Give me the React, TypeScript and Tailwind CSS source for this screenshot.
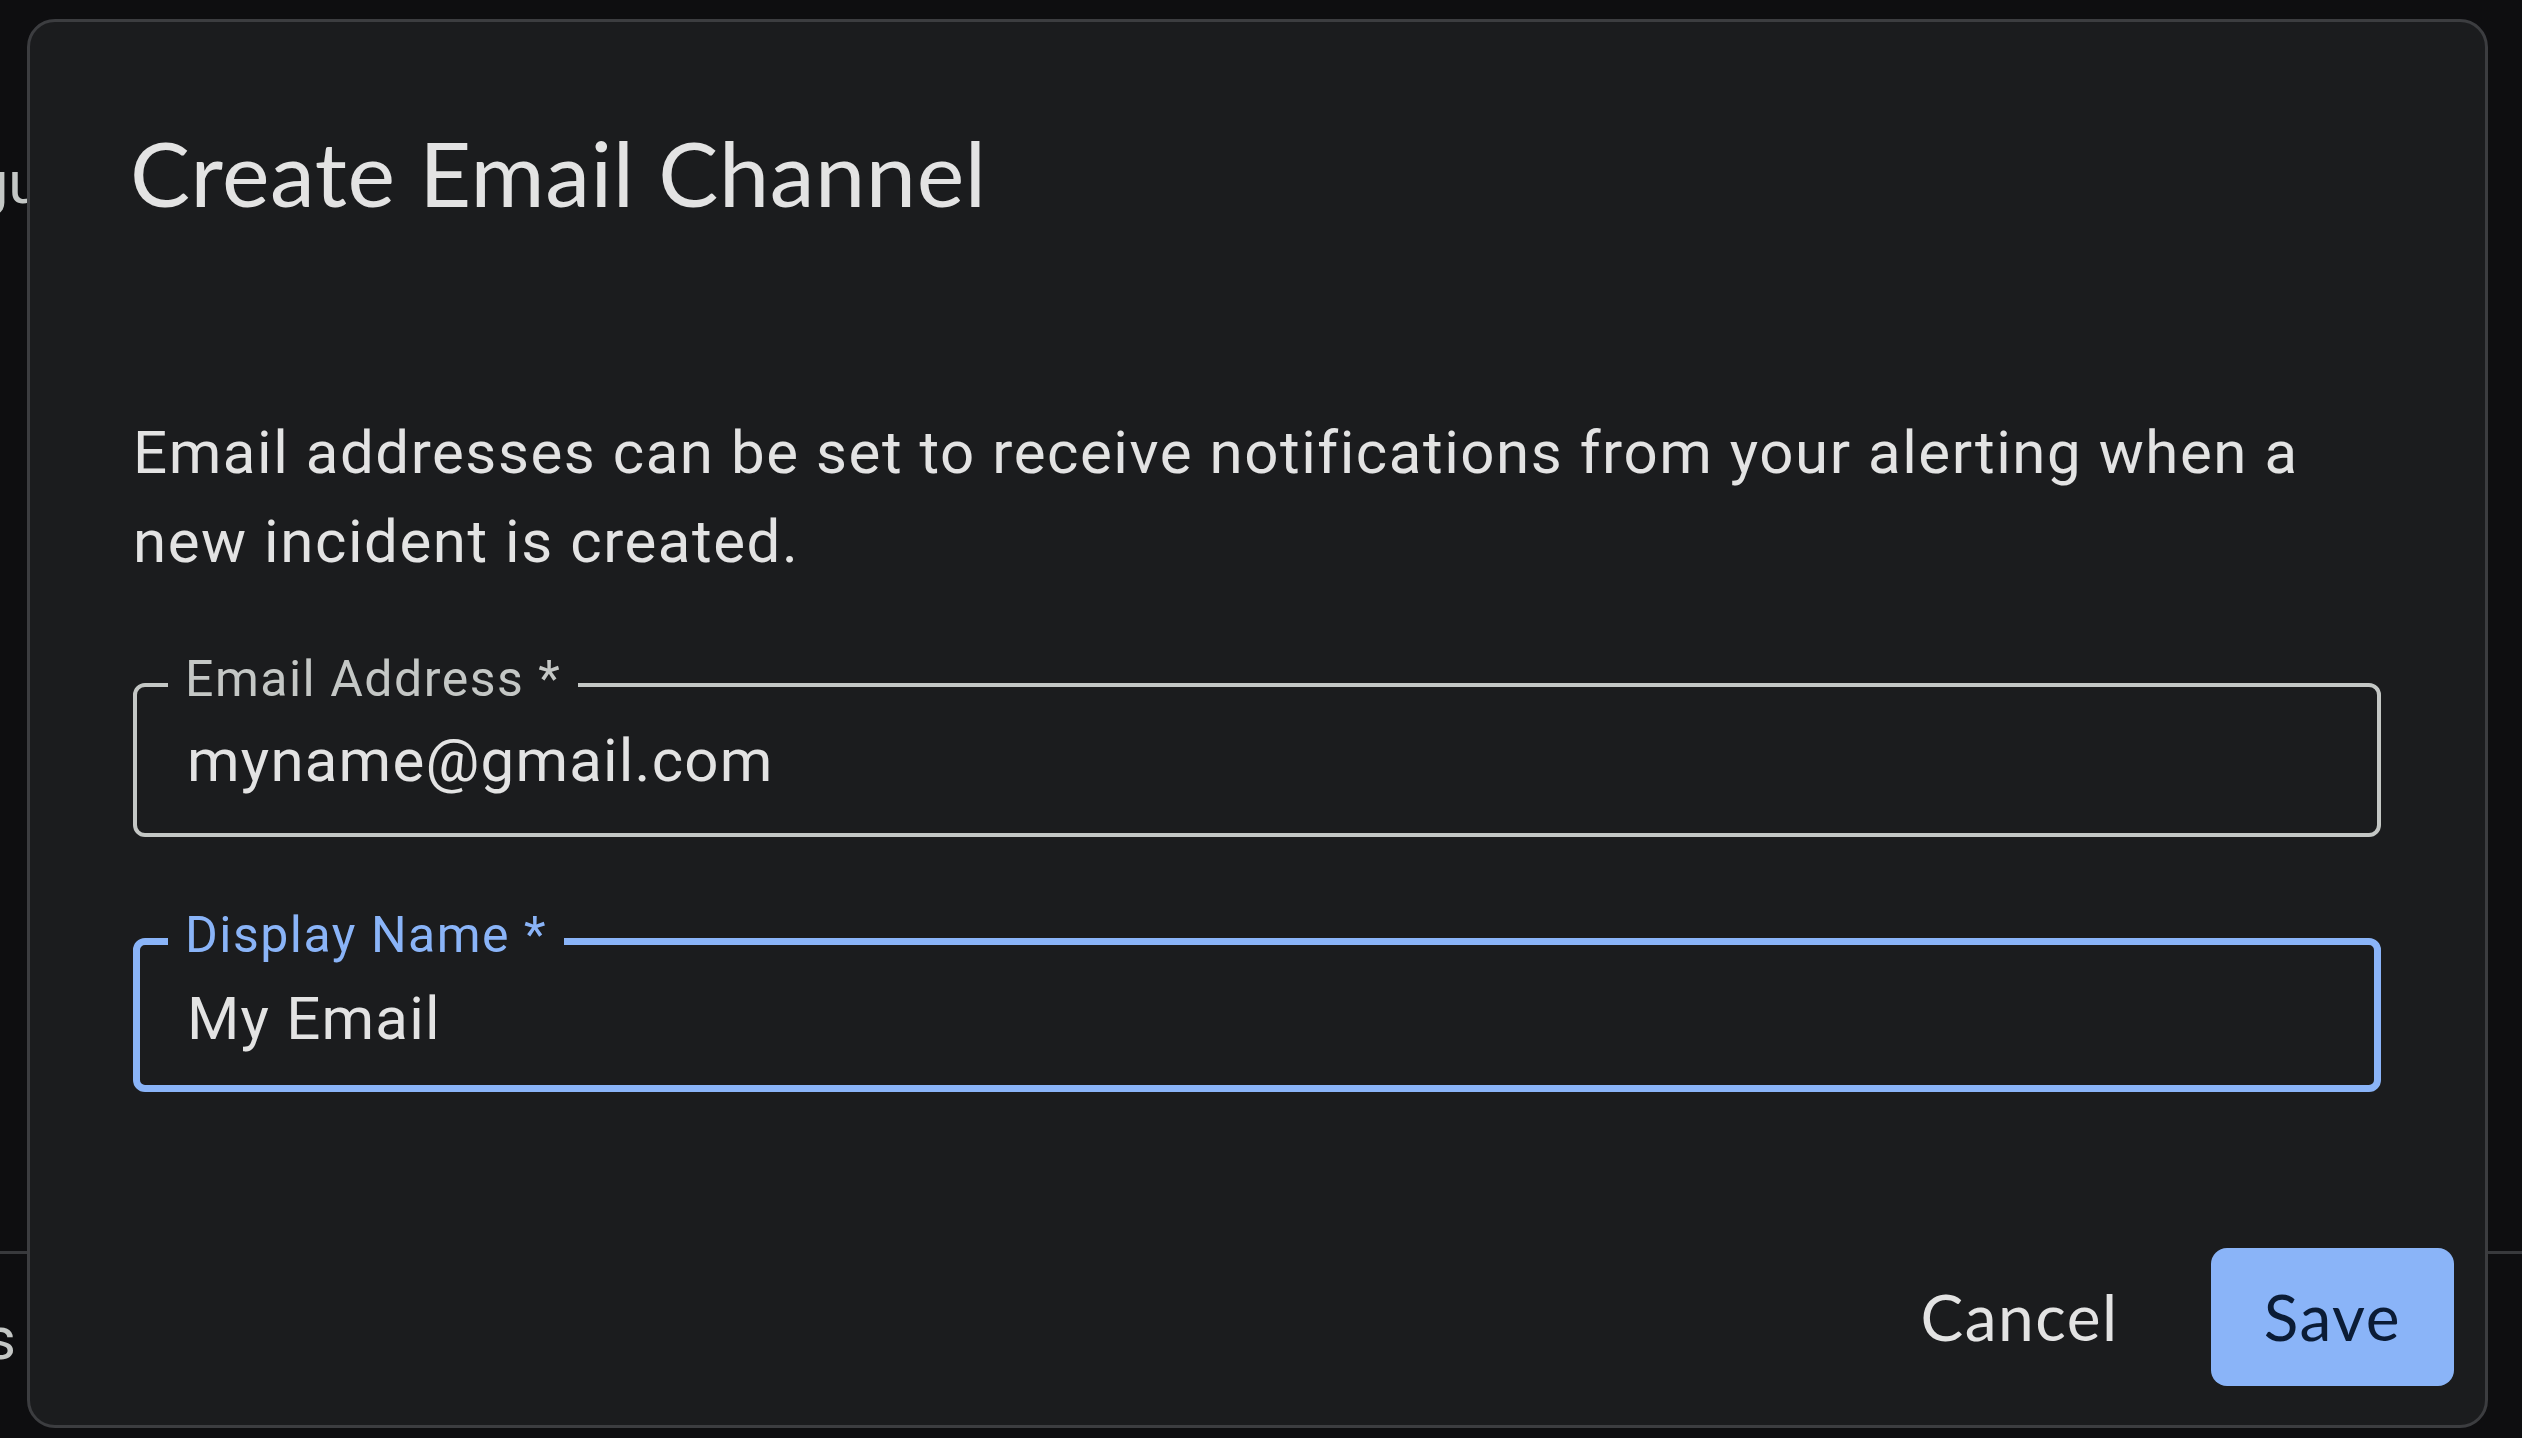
export default function App() {
  return (
    <div className="relative w-[2522px] h-[1438px] overflow-hidden bg-[#0e0e10] font-['Roboto',sans-serif] text-[#c4c7c5]">
      {/* page sitting behind the modal */}
      <div className="flex flex-col h-full">
        <div className="pt-[147px] text-[60px] leading-[72px] whitespace-nowrap">
          <span className="-ml-[165px]">Configure alerting</span>
        </div>
        <div className="mt-[1032px] border-t-[3px] border-[#38393c]" />
        <div className="mt-[49px] w-[16px] flex justify-end text-[60px] leading-[72px]">
          <span className="whitespace-nowrap">Channels</span>
        </div>
      </div>

      {/* modal */}
      <div className="absolute left-[27px] top-[19px] w-[2461px] h-[1409px] rounded-[28px] border-[3px] border-[#3c3d40] bg-[#1b1c1e] flex flex-col">
        <div className="pt-[96px] pl-[103px] pr-[104px]">
          <h2 className="-ml-[3px] font-['Lato',sans-serif] text-[90px] leading-[108px] tracking-[0.6px] text-[#e3e3e3]">
            Create Email Channel
          </h2>
          <p className="mt-[182px] text-[60px] leading-[89px] tracking-[1.55px] text-[#e3e3e3]">
            Email addresses can be set to receive notifications from your alerting when a new incident is created.
          </p>

          <fieldset className="mt-[64px] border-[4px] border-[#c4c7c5] rounded-[12px] pl-[31px] pr-[30px]">
            <legend className="px-[17px] pb-[12px] text-[50px] leading-[58px] tracking-[1.5px] text-[#c4c7c5]">
              Email Address *
            </legend>
            <div className="pl-[19px] pt-[5px] pb-[36px] text-[60px] leading-[72px] tracking-[1.2px] text-[#e3e3e3]">
              myname@gmail.com
            </div>
          </fieldset>

          <fieldset className="mt-[69px] border-[7px] border-[#8ab4f8] rounded-[12px] pl-[28px] pr-[30px]">
            <legend className="px-[17px] pb-[13px] text-[50px] leading-[58px] tracking-[1.5px] text-[#8ab4f8]">
              Display Name *
            </legend>
            <div className="pl-[19px] pt-[6px] pb-[30px] text-[60px] leading-[72px] tracking-[1.2px] text-[#e3e3e3]">
              My Email
            </div>
          </fieldset>
        </div>

        <div className="mt-auto flex justify-end items-center gap-[39px] pr-[31px] pb-[39px] font-['Lato',sans-serif] text-[64px] tracking-[1.5px]">
          <button className="h-[138px] px-[53px] rounded-[16px] text-[#e3e3e3]">Cancel</button>
          <button className="h-[138px] px-[53px] rounded-[16px] bg-[#8ab4f8] text-[#0b1c36]">Save</button>
        </div>
      </div>
    </div>
  );
}
